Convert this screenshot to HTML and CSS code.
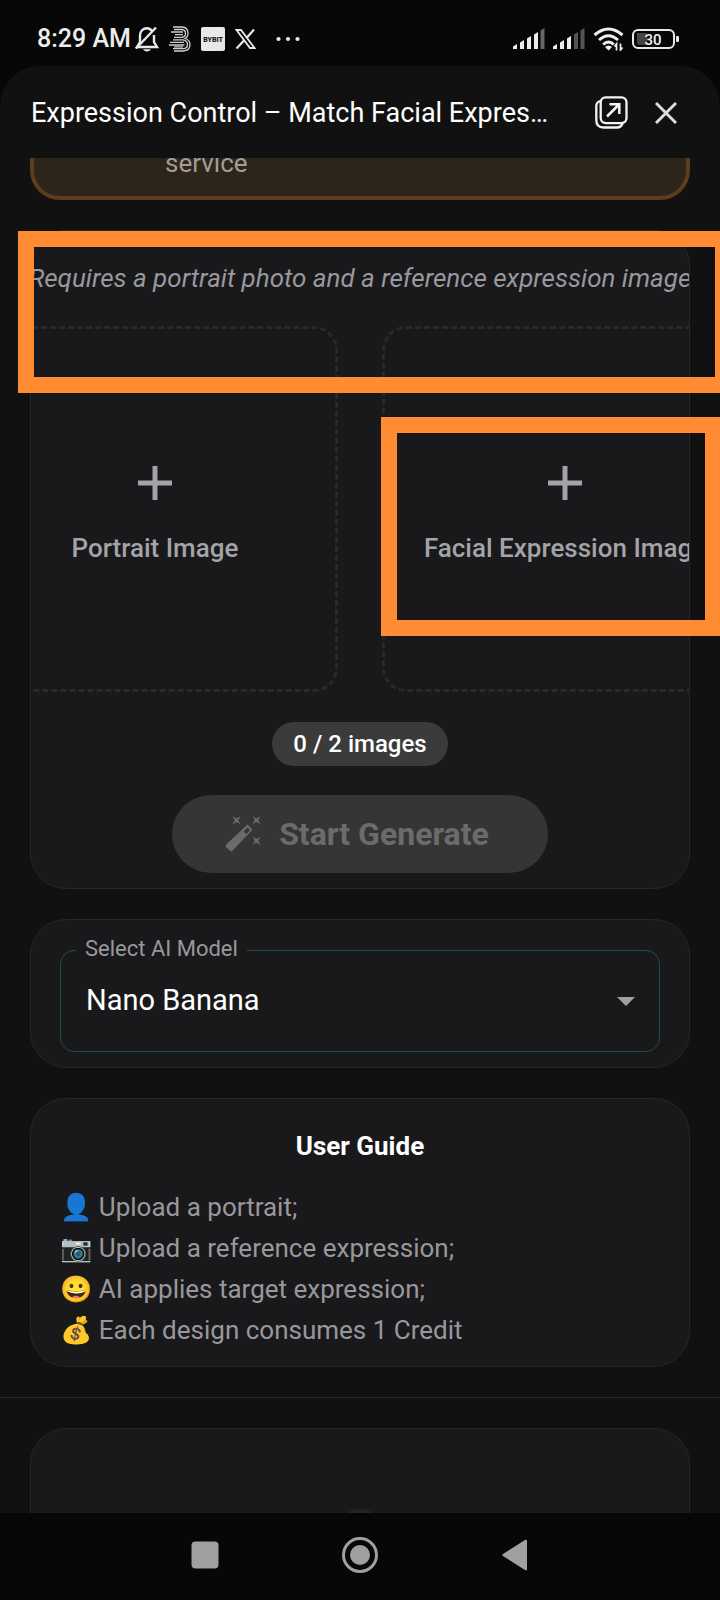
FILE: index.html
```html
<!DOCTYPE html>
<html lang="en">
<head>
<meta charset="utf-8">
<meta name="viewport" content="width=device-width, initial-scale=1">
<title>Expression Control</title>
<link rel="stylesheet" href="styles.css">
</head>
<body>
<div class="app">
  <div class="status">
    <div class="status-left">
      <span class="time">8:29 AM</span>
      <svg class="i-bell" width="24" height="26" viewBox="0 0 24 26" fill="none" stroke="#e8e8e8" stroke-width="2.4"><path d="M17.500 5.500C16 3.200 14 2.200 12 2.200C8 2.200 5 5.200 5 9.500V16L2 21H22L19 16V9"/><path d="M1 22.500L21 1.500"/><path d="M8 23.200H16Q14.500 25.500 12 25.500T8 23.200Z" fill="#e8e8e8" stroke="none"/></svg>
      <svg class="i-b" width="22" height="26" viewBox="0 0 22 26" fill="none" stroke="#cfcfcf" stroke-width="1.300"><path d="M4 1H13Q19 1.500 19 7Q19 11 16 12.500Q21 14 21 18.500Q21 24.500 14 25H5"/><path d="M5 3.500H13Q16.500 4 16.500 7.500T13 11.300H5M2 6H14M6 8.600H14"/><path d="M4 13.800H14Q18.500 14.500 18.500 18.500T14 22.600H4M1 16.300H15M0 19H15.500M5 20.900H14"/></svg>
      <svg class="i-bybit" width="24" height="24" viewBox="0 0 24 24"><rect width="24" height="24" rx="2" fill="#e8e8e8"/><text x="12" y="15" text-anchor="middle" font-family="Roboto, sans-serif" font-weight="900" font-size="7" fill="#222">BYBIT</text></svg>
      <svg class="i-x" width="21" height="20" viewBox="0 0 21 20" fill="none" stroke="#e8e8e8"><path d="M1.500 1H6L19.500 19H15Z" stroke-width="1.800"/><path d="M19 .5L11.800 8.800M9 11.500L1.500 19.500" stroke-width="2.200"/></svg>
      <svg class="i-dots" width="24" height="6" viewBox="0 0 24 6" fill="#e8e8e8"><circle cx="2.500" cy="3" r="2.100"/><circle cx="12" cy="3" r="2.100"/><circle cx="21.500" cy="3" r="2.100"/></svg>
    </div>
    <div class="status-right">
      <svg width="32" height="22" viewBox="0 0 32 22" fill="#ececec"><path d="M0 21V18.500L4 16V21ZM7 21V14.500L11 12V21ZM14 21V10.500L18 8V21ZM21 21V6.500L25 4V21Z"/><path d="M27.500 21V2.500L31.500 0V21Z" fill="#666"/></svg>
      <svg width="32" height="22" viewBox="0 0 32 22" fill="#ececec"><path d="M0 21V18.500L4 16V21ZM7 21V14.500L11 12V21ZM14 21V10.500L18 8V21Z"/><path d="M21 21V6.500L25 4V21ZM27.500 21V2.500L31.500 0V21Z" fill="#555"/></svg>
      <svg class="i-wifi" width="31" height="24" viewBox="0 0 31 24" fill="none" stroke="#f0f0f0" stroke-width="3"><path d="M1.500 8Q15.500-4 29.500 8M6 13Q15.500 4.500 25 13M10.200 17.500Q15.500 12.500 20.800 17.500"/><path d="M12 20Q15.500 16.800 19 20L15.500 23.500Z" fill="#f0f0f0" stroke="none"/><path d="M23.500 23.500V17L21.500 19.500M27.500 16.500V23L29.500 20.500" stroke-width="1.700"/></svg>
      <svg class="i-battery" width="48" height="20" viewBox="0 0 48 20"><rect x="1" y="1" width="41" height="18" rx="5" fill="none" stroke="#e8e8e8" stroke-width="2"/><path d="M5 4H15V16H7Q5 16 5 14Z" fill="#444"/><rect x="44" y="7" width="3" height="6" rx="1" fill="#e8e8e8"/><text x="21" y="15.500" text-anchor="middle" font-family="Roboto, sans-serif" font-weight="500" font-size="15" fill="#f2f2f2">30</text></svg>
    </div>
  </div>

  <div class="sheet">
    <header class="header">
      <h1 class="title">Expression Control – Match Facial Expres…</h1>
      <button class="icon-button" type="button" aria-label="Open in new window">
        <svg width="33" height="33" viewBox="0 0 33 33" fill="none" stroke="#f4f4f4" stroke-width="2.300"><rect x="5.700" y="1.300" width="25.800" height="25.800" rx="5"/><path d="M5.500 5Q1.300 6 1.300 10V24Q1.300 31.500 8.500 31.500H22Q26 31.500 27.500 27.500"/><path d="M12 20.500L24 8.500M14.500 8.200H24.300V18" stroke-width="2.500"/></svg>
      </button>
      <button class="icon-button" type="button" aria-label="Close">
        <svg width="22" height="22" viewBox="0 0 22 22" fill="none" stroke="#dedede" stroke-width="2.900"><path d="M1 1L21 21M21 1L1 21"/></svg>
      </button>
    </header>

    <main class="content">
      <section class="notice"><p class="notice-text">service</p></section>

      <section class="card upload">
        <p class="hint">Requires a portrait photo and a reference expression image</p>
        <div class="tiles">
          <button class="tile" type="button"><svg width="34" height="34" viewBox="0 0 34 34" fill="#a3a3a8"><path d="M14.500 0H19.500V14.500H34V19.500H19.500V34H14.500V19.500H0V14.500H14.500Z"/></svg><span>Portrait Image</span></button>
          <button class="tile" type="button"><svg width="34" height="34" viewBox="0 0 34 34" fill="#a3a3a8"><path d="M14.500 0H19.500V14.500H34V19.500H19.500V34H14.500V19.500H0V14.500H14.500Z"/></svg><span>Facial Expression Image</span></button>
        </div>
        <span class="count">0 / 2 images</span>
        <button class="generate" type="button" disabled>
          <svg width="36" height="36" viewBox="0 0 36 36" fill="#6b6b6d"><path fill-rule="evenodd" d="M22 9Q22.700 8.500 23.400 9.200L27 12.900Q27.500 13.500 27 14.200L7.400 34.800Q6.200 36 5 34.800L1 31Q0 30 1 28.800ZM22.500 11.500L18.700 15.500L21.300 18.100L25.100 14Z"/><path d="M7.500.2L11.500 2.500L15.500.2L13.200 4.200L15.500 8.200L11.500 5.900L7.500 8.200L9.800 4.200ZM27.500.2L31.500 2.500L35.500.2L33.200 4.200L35.500 8.200L31.500 5.900L27.500 8.200L29.800 4.200ZM27.500 20.700L31.500 23L35.500 20.700L33.200 24.700L35.500 28.700L31.500 26.400L27.500 28.700L29.800 24.700Z"/></svg>
          <span>Start Generate</span>
        </button>
      </section>

      <section class="card model">
        <div class="field">
          <label class="field-label" for="model">Select AI Model</label>
          <select class="field-select" id="model"><option>Nano Banana</option></select>
          <svg class="field-arrow" width="18" height="9" viewBox="0 0 18 9" fill="#a0a0a2"><path d="M0 0H18L9 9Z"/></svg>
        </div>
      </section>

      <section class="card guide">
        <h2 class="guide-title">User Guide</h2>
        <ul class="guide-list">
          <li>👤 Upload a portrait;</li>
          <li>📷 Upload a reference expression;</li>
          <li>😀 AI applies target expression;</li>
          <li>💰 Each design consumes 1 Credit</li>
        </ul>
      </section>

      <hr class="divider">

      <section class="card result"><div class="result-icon"></div></section>
    </main>
  </div>

  <nav class="navbar">
    <button class="nav-button" type="button" aria-label="Recent apps"><svg width="40" height="40" viewBox="0 0 40 40" fill="#a0a0a0"><rect x="6.500" y="6.500" width="27" height="27" rx="4"/></svg></button>
    <button class="nav-button" type="button" aria-label="Home"><svg width="40" height="40" viewBox="0 0 40 40" fill="none" stroke="#a0a0a0"><circle cx="20" cy="20" r="16.500" stroke-width="3"/><circle cx="20" cy="20" r="10" fill="#a0a0a0" stroke="none"/></svg></button>
    <button class="nav-button" type="button" aria-label="Back"><svg width="40" height="40" viewBox="0 0 40 40" fill="#a0a0a0"><path d="M30 5Q32 4 32 6V34Q32 36 30 35L8 21Q6.500 20 8 19Z"/></svg></button>
  </nav>

  <div class="mark mark-hint"></div>
  <div class="mark mark-tile"></div>
</div>
</body>
</html>
```
FILE: styles.css
```css
* { box-sizing: border-box; }

body {
  margin: 0;
  background: #070707;
  font-family: Roboto, "Noto Sans", "Noto Color Emoji", sans-serif;
  color: #fff;
}

h1, h2, p, ul { margin: 0; padding: 0; }

button {
  margin: 0;
  padding: 0;
  border: 0;
  background: none;
  color: inherit;
  font-family: inherit;
}

svg { display: block; flex: none; }

.app {
  position: relative;
  display: flex;
  flex-direction: column;
  height: 100vh;
  overflow: hidden;
}

.status {
  display: flex;
  flex: none;
  align-items: center;
  justify-content: space-between;
  height: 66px;
  padding: 12px 40px 0 37px;
}

.status-left, .status-right { display: flex; align-items: center; }
.status-left { gap: 10px; }
.status-right { gap: 8px; }

.time {
  margin-right: -6px;
  font-size: 25px;
  font-weight: 500;
  line-height: 32px;
  color: #ececec;
}

.i-dots { margin-left: 10px; }

.sheet {
  display: flex;
  flex: 1;
  flex-direction: column;
  min-height: 0;
  border-radius: 40px 40px 0 0;
  background: #111;
}

.header {
  display: flex;
  flex: none;
  align-items: center;
  gap: 27px;
  height: 92px;
  padding: 1px 43px 0 31px;
}

.title {
  flex: 1;
  overflow: hidden;
  font-size: 27px;
  font-weight: 400;
  line-height: 36px;
  white-space: nowrap;
}

.content {
  display: flex;
  flex: 1;
  flex-direction: column;
  gap: 30px;
  min-height: 0;
  overflow: hidden;
}

.notice {
  flex: none;
  margin: -38px 30px 0;
  padding: 21px 20px 14px 131px;
  border: 4px solid #5c3d1d;
  border-radius: 30px;
  background: #2d241a;
}

.notice-text {
  font-size: 26px;
  line-height: 37px;
  color: #a39c97;
}

.card {
  flex: none;
  margin: 0 30px;
  border: 1px solid #272729;
  border-radius: 36px;
  background: #19191b;
}

.upload {
  display: flex;
  flex-direction: column;
  align-items: center;
  padding: 29px 0 15px;
  overflow: hidden;
}

.hint {
  font-size: 26px;
  font-style: italic;
  line-height: 36px;
  white-space: nowrap;
  color: #98989d;
}

.tiles {
  display: flex;
  gap: 44px;
  margin: 30px 0;
}

.tile {
  display: flex;
  flex: none;
  flex-direction: column;
  align-items: center;
  justify-content: center;
  gap: 28px;
  width: 366px;
  height: 366px;
  padding-top: 16px;
  border: 3px dashed #29292b;
  border-radius: 24px;
  color: #a3a3a8;
  font-size: 26px;
  font-weight: 500;
  line-height: 40px;
}

.count {
  padding: 0 21px;
  border-radius: 22px;
  background: #3b3b3c;
  font-size: 24px;
  font-weight: 500;
  line-height: 44px;
}

.generate {
  display: flex;
  align-items: center;
  gap: 18px;
  height: 78px;
  margin-top: 29px;
  padding: 0 59px 0 53px;
  border-radius: 40px;
  background: #353536;
  color: #6b6b6d;
  font-size: 32px;
  font-weight: 700;
}

.model { padding: 30px 29px 15px; }

.field { position: relative; }

.field-label {
  position: absolute;
  top: -15px;
  left: 16px;
  padding: 0 9px;
  background: #19191b;
  color: #98989c;
  font-size: 22px;
  line-height: 28px;
}

.field-select {
  display: block;
  width: 100%;
  height: 102px;
  padding: 0 60px 3px 25px;
  border: 1px solid #1f4f43;
  border-radius: 14px;
  appearance: none;
  background: transparent;
  color: #fff;
  font-family: inherit;
  font-size: 29px;
}

.field-arrow {
  position: absolute;
  top: 47px;
  right: 25px;
  pointer-events: none;
}

.guide { padding: 28px 29px 15px; }

.guide-title {
  margin-bottom: 22px;
  font-size: 26px;
  font-weight: 700;
  line-height: 38px;
  text-align: center;
}

.guide-list {
  list-style: none;
  color: #98989c;
  font-size: 26px;
  line-height: 41px;
}

.divider {
  flex: none;
  width: 100%;
  height: 1px;
  margin: 0;
  border: 0;
  background: #29292b;
}

.result {
  display: flex;
  justify-content: center;
  height: 320px;
  padding-top: 80px;
}

.result-icon {
  width: 48px;
  height: 48px;
  border-radius: 50%;
  background: #252527;
}

.navbar {
  display: flex;
  flex: none;
  align-items: center;
  justify-content: center;
  gap: 115px;
  height: 87px;
  padding-bottom: 4px;
  background: #070707;
}

.mark {
  position: absolute;
  border: 16px solid #ff8b32;
  pointer-events: none;
}

.mark-hint {
  top: 231px;
  right: -11px;
  left: 18px;
  height: 162px;
}

.mark-tile {
  top: 417px;
  right: -1px;
  left: 381px;
  height: 219px;
}
```
